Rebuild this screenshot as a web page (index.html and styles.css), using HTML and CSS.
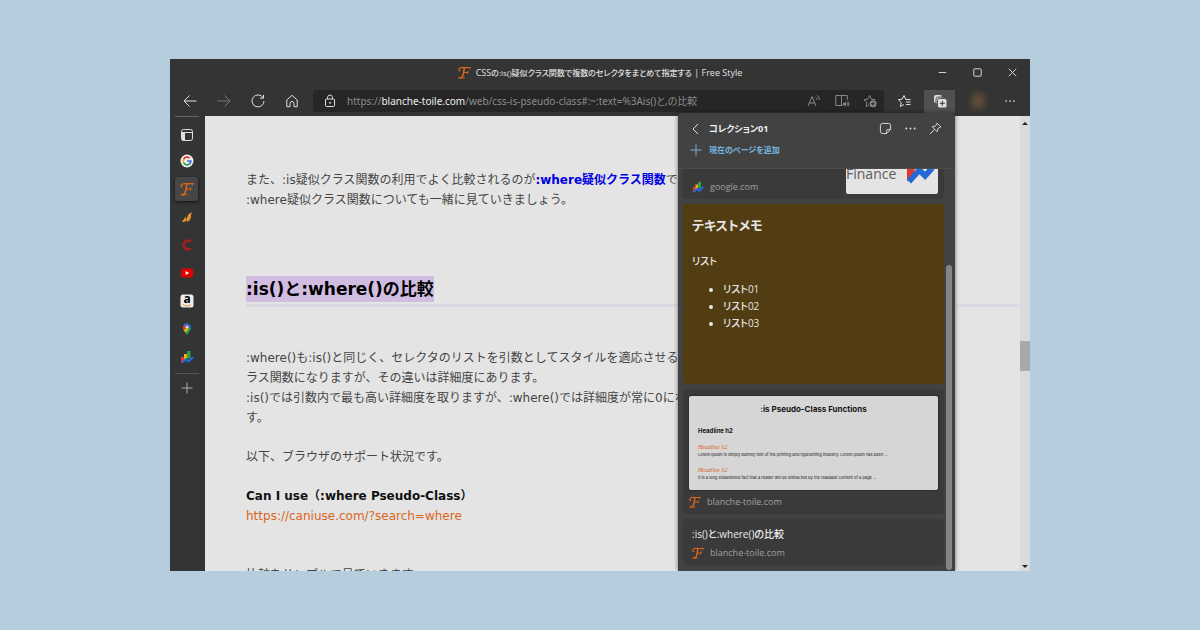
FILE: index.html
```html
<!DOCTYPE html>
<html lang="ja">
<head>
<meta charset="utf-8">
<meta name="viewport" content="width=device-width, initial-scale=1">
<title>CSSの:is()疑似クラス関数で複数のセレクタをまとめて指定する | Free Style</title>
<link rel="stylesheet" href="styles.css">
</head>
<body>
<svg class="defs" aria-hidden="true">
  <symbol id="logo" viewBox="0 0 14 14">
    <g fill="none" stroke="#d9651c" stroke-linecap="round">
      <path d="M2 5.2C.4 4.6.7 2.200 3.200 1.800 6 1.400 9 2 13 1.600" stroke-width="1.3"/>
      <path d="M13 1.600l-.5 1.800" stroke-width=".8"/>
      <path d="M6.800 2C6.500 6 6 9 4.800 11.500 4 13 2.300 13.200 1.300 12.600" stroke-width="1.7"/>
      <path d="M6.500 7h4M10.800 5.800l-.5 2.400" stroke-width="1.1"/>
      <path d="M4 12.800h3" stroke-width=".9"/>
    </g>
  </symbol>
  <symbol id="finance" viewBox="0 0 14 14">
    <g stroke="none">
      <path d="M1 7h3v5.500H1z" fill="#e0392c"/>
      <path d="M4 4h3v6H4z" fill="#f2b200"/>
      <path d="M7 1h3.500v7.500H7z" fill="#2f9e4d"/>
    </g>
    <path d="M2 12.800l4-3.600 2.500 2.300L13.200 7" fill="none" stroke="#2469d8" stroke-width="2.200"/>
  </symbol>
  <symbol id="dots" viewBox="0 0 14 14">
    <g fill="#e0e0e0" stroke="none"><circle cx="2.500" cy="7" r="1"/><circle cx="7" cy="7" r="1"/><circle cx="11.500" cy="7" r="1"/></g>
  </symbol>
  <symbol id="plus" viewBox="0 0 14 14">
    <path d="M7 1.500v11M1.500 7h11" fill="none" stroke="currentColor"/>
  </symbol>
</svg>

<div class="window">
  <header class="titlebar">
    <div class="tab-title">
      <svg class="icon"><use href="#logo"/></svg>
      <span>CSS<small>の:is()疑似クラス関数で複数のセレクタをまとめて指定する</small> | Free Style</span>
    </div>
    <div class="controls">
      <button type="button" aria-label="最小化"><svg class="icon" viewBox="0 0 14 14"><path d="M3 7h8"/></svg></button>
      <button type="button" aria-label="最大化"><svg class="icon" viewBox="0 0 14 14"><rect x="3" y="3" width="8" height="8" rx="1"/></svg></button>
      <button type="button" aria-label="閉じる"><svg class="icon" viewBox="0 0 14 14"><path d="M3 3l8 8M11 3l-8 8"/></svg></button>
    </div>
  </header>

  <div class="toolbar">
    <nav class="nav">
      <button type="button" aria-label="戻る"><svg class="icon" viewBox="0 0 14 14"><path d="M13.500 7h-12M6.500 1.500L1 7l5.500 5.500"/></svg></button>
      <button type="button" class="dim" aria-label="進む"><svg class="icon" viewBox="0 0 14 14"><path d="M.5 7h12M7.500 1.500L13 7l-5.500 5.500"/></svg></button>
      <button type="button" aria-label="更新"><svg class="icon" viewBox="0 0 14 14"><path d="M12 3.600A6 6 0 1 0 13 7M12.500.8v3.400H9"/></svg></button>
      <button type="button" aria-label="ホーム"><svg class="icon" viewBox="0 0 14 14"><path d="M1.800 6L7 1.300 12.200 6v6.700H9V9.500a2 2 0 0 0-4 0v3.200H1.800z" stroke-linejoin="round"/></svg></button>
    </nav>
    <div class="address">
      <svg class="icon" viewBox="0 0 14 14"><rect x="2.500" y="5" width="9" height="7.500" rx="1"/><path d="M4.500 5V3.500a2.500 2.500 0 0 1 5 0V5"/><circle cx="7" cy="8.800" r=".6"/></svg>
      <div class="url" role="textbox" aria-label="アドレス">https://<b>blanche-toile.com</b>/web/css-is-pseudo-class#:~:text=%3Ais()と,の比較</div>
      <div class="address-actions">
        <button type="button" aria-label="音声で読み上げる"><svg class="icon" viewBox="0 0 14 14"><path d="M1 12L5 2.500 9 12M2.300 9h5.400M8.500 3.200a3 3 0 0 1 1.500 2.600M9.800 1.300a5 5 0 0 1 2.700 4.500"/></svg></button>
        <button type="button" aria-label="イマーシブ リーダー"><svg class="icon" viewBox="0 0 14 14"><path d="M6.500 11.500H.8v-10h5.700v10l1.500-.4M6.500 1.500h5.800v4.500"/><path d="M8 9h1.200l1.800-1.500v5L9.200 11H8z" class="solid"/><path d="M12 8.500c.8.8.8 2.200 0 3M13 7.500c1.200 1.500 1.200 3.500 0 5"/></svg></button>
        <button type="button" aria-label="お気に入りに追加"><svg class="icon" viewBox="0 0 14 14"><path d="M6 11L3.200 12.500l.7-4L1 5.700l3.900-.6L6.600 1.500l1.800 3.600 3.900.6"/><circle cx="10" cy="9.800" r="3.500" class="solid"/><path d="M10 8v3.600M8.200 9.800h3.600" stroke="#262626"/></svg></button>
      </div>
    </div>
    <button type="button" class="favorites" aria-label="お気に入り"><svg class="icon" viewBox="0 0 14 14"><path d="M7 10.500l-3.500 2 .7-4L1.300 5.700l3.900-.6L7 1.500l1.600 3.500M8.500 5.500h5M9 8h4.500M9 10.500h4.500"/></svg></button>
    <button type="button" class="collections" aria-label="コレクション"><svg class="icon" viewBox="0 0 14 14"><rect x="1" y="1" width="8" height="8" rx="2" class="white"/><rect x="3" y="3" width="8" height="8" rx="2" class="white gap"/><rect x="4.500" y="4.500" width="9.500" height="9.500" rx="2" class="white gap"/><path d="M9.300 6.800v5M6.800 9.300h5" stroke="#333"/></svg></button>
    <button type="button" class="profile" aria-label="プロファイル"><span class="avatar"></span></button>
    <button type="button" class="more" aria-label="設定など"><svg class="icon"><use href="#dots"/></svg></button>
  </div>

  <div class="body">
    <aside class="tabs">
      <button type="button" aria-label="タブ操作メニュー" class="tab-menu"><svg class="icon" viewBox="0 0 14 14"><rect x="1.500" y="1.500" width="11" height="11" rx="2"/><path d="M4.500 4.500v8M1.500 4.500h11"/><path d="M2 4.500h2.500v8H2z" class="white"/></svg></button>
      <button type="button" aria-label="Google"><svg class="icon" viewBox="0 0 14 14"><circle cx="7" cy="7" r="6.500" fill="#eee" stroke="none"/><g stroke-width="1.700"><path d="M9.700 4.200A3.800 3.800 0 0 0 3.600 5.300" stroke="#e33b2e"/><path d="M3.600 5.300a3.800 3.800 0 0 0 0 3.400" stroke="#f2b200"/><path d="M3.600 8.700a3.800 3.800 0 0 0 5.800 1.300" stroke="#2f9e4d"/><path d="M9.400 10A3.800 3.800 0 0 0 10.800 7H7" stroke="#2f6fe0"/></g></svg></button>
      <button type="button" class="active" aria-label="Free Style"><svg class="icon"><use href="#logo"/></svg></button>
      <button type="button" aria-label="アナリティクス"><svg class="icon" viewBox="0 0 14 14"><path d="M1.500 12c2-1 2-3.500 4.500-5.500l-.3 3.300C7.500 8.500 7 6 8.500 4.500 9.500 3 11.500 3 12.800 1.500c-1 2-1.800 2-1.800 4 0 4-2 6-4.500 6.200l.3-1.700C5.500 11.500 4 12.300 1.500 12z" fill="#e5932d" stroke="none"/></svg></button>
      <button type="button" aria-label="Can I use"><svg class="icon" viewBox="0 0 14 14"><path d="M10.800 3.800a4.300 4.300 0 1 0 0 6.400" stroke="#a11f1f" stroke-width="2.800"/></svg></button>
      <button type="button" aria-label="YouTube"><svg class="icon" viewBox="0 0 14 14"><rect x=".8" y="2.500" width="12.400" height="9" rx="2" fill="#e00000" stroke="none"/><path d="M5.700 5l3.500 2-3.500 2z" fill="#fff" stroke="none"/></svg></button>
      <button type="button" class="amazon" aria-label="Amazon"><svg class="icon" viewBox="0 0 14 14"><rect x=".5" y=".5" width="13" height="13" rx="2.500" fill="#eee" stroke="none"/><text x="7" y="9" text-anchor="middle">a</text><path d="M2.500 10.500c2.500 1.700 6 1.800 8.500.2" stroke="#e5932d"/></svg></button>
      <button type="button" aria-label="Google マップ"><svg class="icon" viewBox="0 0 14 14"><g stroke="none"><path d="M7 13.500c-.5-2.500-4-4.700-4-7.800L7 5l4 .7C11 8.500 7.500 11 7 13.500z" fill="#2f9e4d"/><path d="M3 5.700A4.200 4.200 0 0 1 4.200 2.300L7 5 4 8.500z" fill="#e33b2e"/><path d="M4 8.500L7 5l1.500 2-3.200 3.500z" fill="#f2b200"/><path d="M4 2.500a4.200 4.200 0 0 1 7 2.800L7 6.500z" fill="#2f6fe0"/><circle cx="7" cy="5.200" r="1.400" fill="#ddd"/></g></svg></button>
      <button type="button" aria-label="Google Finance"><svg class="icon"><use href="#finance"/></svg></button>
      <hr>
      <button type="button" aria-label="新しいタブ" class="new-tab"><svg class="icon"><use href="#plus"/></svg></button>
    </aside>

    <main class="page">
      <article>
        <p>また、:is疑似クラス関数の利用でよく比較されるのが<strong class="term">:where疑似クラス関数</strong>です。<br>:where疑似クラス関数についても一緒に見ていきましょう。</p>
        <h2><mark>:is()と:where()の比較</mark></h2>
        <p>:where()も:is()と同じく、セレクタのリストを引数としてスタイルを適応させる疑似ク<br>ラス関数になりますが、その違いは詳細度にあります。<br>:is()では引数内で最も高い詳細度を取りますが、:where()では詳細度が常に0になりま<br>す。</p>
        <p>以下、ブラウザのサポート状況です。</p>
        <p><strong>Can I use（:where Pseudo-Class）</strong><br><a href="https://caniuse.com/?search=where">https://caniuse.com/?search=where</a></p>
        <p class="next">比較をサンプルで見ていきます。</p>
      </article>
      <div class="scrollbar" aria-hidden="true">
        <span class="arrow up"></span>
        <span class="track"><span class="thumb"></span></span>
        <span class="arrow down"></span>
      </div>
    </main>
  </div>

  <section class="panel" aria-label="コレクション">
    <header class="panel-head">
      <div class="panel-row">
        <button type="button" aria-label="戻る"><svg class="icon" viewBox="0 0 14 14"><path d="M9 2L4 7l5 5"/></svg></button>
        <h3>コレクション01</h3>
        <div class="panel-actions">
          <button type="button" aria-label="メモを追加"><svg class="icon" viewBox="0 0 14 14"><path d="M8 12.500H4a2.500 2.500 0 0 1-2.500-2.500V4A2.500 2.500 0 0 1 4 1.500h6A2.500 2.500 0 0 1 12.500 4v4zM8 12.500V10a2 2 0 0 1 2-2h2.500"/></svg></button>
          <button type="button" aria-label="その他"><svg class="icon"><use href="#dots"/></svg></button>
          <button type="button" aria-label="ピン留め"><svg class="icon" viewBox="0 0 14 14"><path d="M8.700 1.200l4.100 4.100-3 1.500-1 3.700-5.300-5.300 3.700-1zM6 8l-5 5" stroke-linejoin="round"/></svg></button>
        </div>
      </div>
      <button type="button" class="add"><svg class="icon"><use href="#plus"/></svg>現在のページを追加</button>
    </header>
    <div class="panel-body">
      <div class="cards">
        <div class="card google">
          <div class="source"><svg class="icon"><use href="#finance"/></svg>google.com</div>
          <div class="finance-thumb"><span>Finance</span><svg viewBox="0 0 28 24"><path d="M0 4h8v8l-8 9z" fill="#e0392c"/><path d="M2 21L13 9l6 6L28 5" fill="none" stroke="#2469d8" stroke-width="6"/></svg></div>
        </div>
        <div class="card note">
          <h4>テキストメモ</h4>
          <p>リスト</p>
          <ul><li>リスト01</li><li>リスト02</li><li>リスト03</li></ul>
        </div>
        <div class="card shot">
          <div class="shot-thumb">
            <h5>:is Pseudo-Class Functions</h5>
            <h6>Headline h2</h6>
            <em>Headline h2</em>
            <p>Lorem Ipsum is simply dummy text of the printing and typesetting industry. Lorem Ipsum has been ...</p>
            <em>Headline h2</em>
            <p>It is a long established fact that a reader will be distracted by the readable content of a page ...</p>
          </div>
          <div class="source"><svg class="icon"><use href="#logo"/></svg>blanche-toile.com</div>
        </div>
        <div class="card link">
          <h4>:is()と:where()の比較</h4>
          <div class="source"><svg class="icon"><use href="#logo"/></svg>blanche-toile.com</div>
        </div>
      </div>
      <div class="panel-scroll" aria-hidden="true"><span></span></div>
    </div>
  </section>
</div>
</body>
</html>
```
FILE: styles.css
```css
* { box-sizing: border-box; margin: 0; padding: 0; }

body {
  background: #b5cddd;
  padding: 59px 170px;
  height: 100vh;
  font-family: "Open Sans", "Noto Sans CJK JP", sans-serif;
}

.defs { position: absolute; width: 0; height: 0; }
.icon { width: 14px; height: 14px; flex: none; fill: none; stroke: currentColor; overflow: visible; }
.icon .solid { fill: currentColor; stroke: none; }
.icon .white { fill: #e0e0e0; stroke: none; }
.icon .gap { stroke: #505050; }

button {
  display: flex;
  align-items: center;
  justify-content: center;
  border: 0;
  background: none;
  color: #e0e0e0;
  font: inherit;
}

.window {
  position: relative;
  display: flex;
  flex-direction: column;
  height: 100%;
  overflow: hidden;
  background: #343434;
  color: #e0e0e0;
}

/* title bar */
.titlebar {
  display: grid;
  grid-template-columns: 1fr auto 1fr;
  align-items: center;
  height: 26px;
  font-size: 9px;
  font-feature-settings: "palt";
}
.tab-title { grid-column: 2; display: flex; align-items: center; gap: 5px; white-space: nowrap; }
.tab-title small { font-size: 8px; font-weight: 500; }
.tab-title .icon { width: 13px; height: 13px; }
.controls { display: flex; justify-content: flex-end; }
.controls button { width: 35px; height: 26px; }
.controls .icon { width: 13px; height: 13px; }

/* toolbar */
.toolbar { display: flex; align-items: center; height: 31px; padding: 1px 11px 0 3px; }
.nav { display: flex; margin-right: 4px; }
.nav button { width: 34px; }
.nav .dim { color: #777; }
.address {
  display: flex;
  flex: 1;
  align-items: center;
  min-width: 0;
  height: 22px;
  padding: 0 7px 0 10px;
  gap: 10px;
  border-radius: 3px;
  background: #262626;
}
.url {
  flex: 1;
  overflow: hidden;
  white-space: nowrap;
  color: #8c8c8c;
  font: 10px/16px "Noto Sans", "Noto Sans CJK JP", sans-serif;
  font-feature-settings: "palt";
}
.url b { font-weight: 400; color: #f0f0f0; }
.address-actions { display: flex; gap: 14px; }
.address-actions button { color: #888; }
.favorites { width: 40px; }
.collections { width: 31px; height: 23px; background: #505050; }
.profile { width: 46px; }
.avatar { width: 14px; height: 16px; border-radius: 6px; background: #5f4c36; filter: blur(3px); }
.more { width: 18px; }
.more .icon { width: 12px; }

.body { display: flex; flex: 1; min-height: 0; }

/* vertical tabs */
.tabs {
  display: flex;
  flex-direction: column;
  align-items: center;
  gap: 4px;
  width: 35px;
  padding: 8px 2px 0 0;
  background: linear-gradient(#666, #666) 5px 0 / 24px 1px no-repeat;
}
.tabs button { width: 23px; height: 24px; border-radius: 3px; }
.tabs .tab-menu { height: 21px; }
.tabs .active { background: #464646; box-shadow: 0 1px 3px #111; }
.tabs hr { width: 24px; border: 0; border-top: 1px solid #555; }
.tabs .new-tab { height: 20px; color: #aaa; }
.amazon text { font: 700 12px "Open Sans", sans-serif; fill: #000; stroke: none; }

/* page */
.page { display: flex; flex: 1; min-width: 0; overflow: hidden; background: #e4e4e4; }
article {
  flex: 1;
  min-width: 0;
  padding: 54px 0 0 41px;
  color: #444;
  font: 12px/20px "DejaVu Sans", "Noto Sans CJK JP", sans-serif;
  white-space: nowrap;
}
article p { margin-bottom: 19px; }
article h2 {
  margin: 66px 0 41px;
  padding-bottom: 2px;
  border-bottom: 3px solid #d8dce2;
  color: #000;
  font-size: 17px;
  line-height: 26px;
}
article mark { display: block; width: fit-content; background: #d1bce2; color: #000; }
article strong { color: #111; }
article .term { color: #0000e0; }
article a { color: #d9651c; text-decoration: none; }
article .next { margin-top: 39px; }

.scrollbar { display: flex; flex-direction: column; align-items: center; width: 10px; padding: 6px 0 3px; background: #dadada; }
.arrow { border: 3px solid transparent; }
.arrow.up { border-top: 0; border-bottom-color: #222; }
.arrow.down { border-bottom: 0; border-top-color: #222; }
.track { position: relative; flex: 1; width: 100%; }
.thumb { position: absolute; top: 49%; width: 100%; height: 30px; background: #a8a8a8; }

/* collections panel */
.panel {
  position: absolute;
  top: 54px;
  right: 75px;
  bottom: 0;
  display: flex;
  flex-direction: column;
  width: 277px;
  background: #424242;
  border-radius: 3px 3px 0 0;
  box-shadow: 0 0 4px #0008;
  font-feature-settings: "palt";
}
.panel-head { height: 56px; padding: 5px 13px 0 11px; border-bottom: 1px solid #4c4c4c; }
.panel-row { display: flex; align-items: center; height: 21px; gap: 6px; }
.panel-row h3 { flex: 1; font-size: 9px; color: #f0f0f0; }
.panel-actions { display: flex; gap: 12px; }
.panel-actions .icon { width: 13px; height: 13px; }
.add { height: 21px; gap: 6px; color: #76b3de; font-size: 8px; font-weight: 600; }
.panel-body { display: flex; flex: 1; min-height: 0; overflow: hidden; }
.cards { display: flex; flex: 1; flex-direction: column; gap: 5px; min-width: 0; padding-left: 5px; }
.card { flex: none; border-radius: 3px; background: #3a3a3a; }
.source { display: flex; align-items: center; gap: 6px; color: #a0a0a0; font-size: 9px; line-height: 14px; }
.source .icon { width: 12px; height: 12px; }

.google { display: flex; align-items: flex-end; justify-content: space-between; height: 30px; padding: 0 6px 5px 9px; overflow: hidden; border-radius: 0 0 3px 3px; }
.finance-thumb {
  display: flex;
  align-items: center;
  justify-content: flex-end;
  gap: 11px;
  width: 92px;
  height: 42px;
  padding-right: 4px;
  overflow: hidden;
  border-radius: 2px;
  background: #e4e4e4;
  color: #5c5c5c;
  font: 14px "Open Sans", sans-serif;
}
.finance-thumb svg { width: 28px; height: 24px; }

.note { height: 180px; padding: 10px 9px; background: #523c12; color: #e6e6e6; font-size: 10px; font-weight: 500; line-height: 16px; }
.note h4 { font-size: 13px; line-height: 22px; }
.note p { margin: 17px 0 12px; }
.note ul { padding-left: 31px; }
.note li { line-height: 17px; }

.shot { padding: 7px 6px 5px; }
.shot-thumb { height: 94px; padding: 8px 9px; border-radius: 2px; background: #d6d6d6; color: #151515; font-family: Inter, sans-serif; box-shadow: 0 0 2px #111; overflow: hidden; white-space: nowrap; }
.shot-thumb h5 { font-size: 8px; line-height: 10px; text-align: center; }
.shot-thumb h6 { margin: 12px 0 7px; font-size: 6px; line-height: 10px; }
.shot-thumb em { display: block; color: #d9651c; font: italic 6px/8px "Liberation Serif", serif; }
.shot-thumb p { margin-bottom: 8px; font-size: 4px; line-height: 7px; }
.shot .source { margin-top: 5px; }

.link { height: 46px; padding: 7px 9px; }
.link h4 { font-size: 10px; font-weight: 500; line-height: 16px; color: #eee; }
.link .source { margin-top: 4px; }

.panel-scroll { width: 11px; padding: 96px 3px 1px 2px; }
.panel-scroll span { display: block; height: 100%; border-radius: 3px; background: #858585; }
```
